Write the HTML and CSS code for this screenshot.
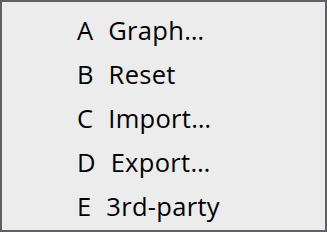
FILE: index.html
```html
<!DOCTYPE html>
<html>
<head>
<meta charset="utf-8">
<link rel="stylesheet" href="styles.css">
</head>
<body>
<div class="menu">
  <div class="item">A  Graph…</div>
  <div class="item">B  Reset</div>
  <div class="item">C  Import…</div>
  <div class="item">D  Export…</div>
  <div class="item">E  3rd-party</div>
</div>
</body>
</html>
```
FILE: styles.css
```css
html, body {
  margin: 0;
  padding: 0;
}
body {
  width: 327px;
  height: 232px;
  overflow: hidden;
}
.menu {
  box-sizing: border-box;
  width: 327px;
  height: 232px;
  border: 2px solid #5f5f63;
  background: #ececec;
  padding: 6px 0 0 75px;
  display: flex;
  flex-direction: column;
  font-family: "Open Sans", sans-serif;
  font-size: 25.5px;
  word-spacing: 0.5px;
  letter-spacing: 0.3px;
  color: #000;
}
.item {
  height: 44px;
  line-height: 44px;
  white-space: pre;
}
```
